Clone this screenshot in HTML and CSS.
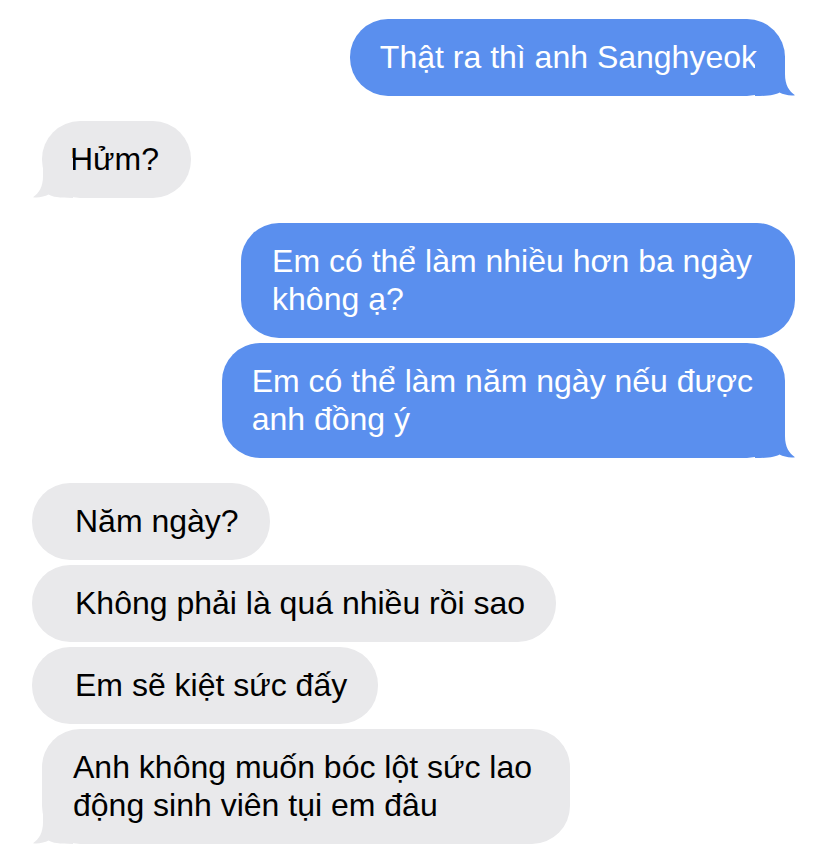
FILE: index.html
```html
<!DOCTYPE html>
<html lang="vi">
<head>
<meta charset="utf-8">
<title>Messages</title>
<link rel="stylesheet" href="styles.css">
</head>
<body>
<main class="thread">
  <section class="group">
    <div class="bubble out tail b1">Thật ra thì anh Sanghyeok<svg class="tail-svg" viewBox="0 0 40 40" width="40" height="40" aria-hidden="true"><path d="M0 0 H30 V18 C30 29 34 35 40 39.3 C34.5 40 28.5 38.8 24.5 36.6 C20.5 39 14 40 0 40 Z"/></svg></div>
  </section>
  <section class="group">
    <div class="bubble in tail b2">Hửm?<svg class="tail-svg" viewBox="0 0 40 40" width="40" height="40" aria-hidden="true"><path d="M0 0 H30 V18 C30 29 34 35 40 39.3 C34.5 40 28.5 38.8 24.5 36.6 C20.5 39 14 40 0 40 Z"/></svg></div>
  </section>
  <section class="group">
    <div class="bubble out b3">Em có thể làm nhiều hơn ba ngày<br>không ạ?</div>
    <div class="bubble out tail b4">Em có thể làm năm ngày nếu được<br>anh đồng ý<svg class="tail-svg" viewBox="0 0 40 40" width="40" height="40" aria-hidden="true"><path d="M0 0 H30 V18 C30 29 34 35 40 39.3 C34.5 40 28.5 38.8 24.5 36.6 C20.5 39 14 40 0 40 Z"/></svg></div>
  </section>
  <section class="group">
    <div class="bubble in plain">Năm ngày?</div>
    <div class="bubble in plain">Không phải là quá nhiều rồi sao</div>
    <div class="bubble in plain">Em sẽ kiệt sức đấy</div>
    <div class="bubble in tail b8">Anh không muốn bóc lột sức lao<br>động sinh viên tụi em đâu<svg class="tail-svg" viewBox="0 0 40 40" width="40" height="40" aria-hidden="true"><path d="M0 0 H30 V18 C30 29 34 35 40 39.3 C34.5 40 28.5 38.8 24.5 36.6 C20.5 39 14 40 0 40 Z"/></svg></div>
  </section>
</main>
</body>
</html>
```
FILE: styles.css
```css
html, body {
  margin: 0;
  padding: 0;
  background: #ffffff;
}

body {
  width: 828px;
  height: 868px;
  overflow: hidden;
  font-family: "Liberation Sans", Arial, sans-serif;
  font-size: 32px;
  line-height: 38px;
}

.thread {
  display: flex;
  flex-direction: column;
  gap: 25px;
  padding: 19px 33px 0 32px;
}

.group {
  display: flex;
  flex-direction: column;
  gap: 5px;
}

.bubble {
  position: relative;
  padding: 19px 31px 20px 43px;
  border-radius: 38px;
  white-space: nowrap;
}

.bubble.out {
  align-self: flex-end;
  background: #5a8fee;
  color: #ffffff;
  fill: #5a8fee;
}

.bubble.in {
  align-self: flex-start;
  background: #e9e9eb;
  color: #000000;
  fill: #e9e9eb;
}

/* per-bubble padding tweaks */
.b1 { padding: 19px 28px 20px 30px; }
.b2 { padding: 19px 32px 20px 28px; }
.b3 { padding: 19px 43px 20px 31px; }
.b4 { padding: 19px 32px 20px 30px; }
.b8 { padding: 19px 38px 20px 31px; }

/* tails */
.bubble.out.tail { margin-right: 10px; }
.bubble.in.tail { margin-left: 10px; }

.tail-svg {
  position: absolute;
  bottom: 0;
  display: block;
}

.bubble.out .tail-svg {
  right: -10px;
}

.bubble.in .tail-svg {
  left: -9px;
  transform: scaleX(-1);
}
```
